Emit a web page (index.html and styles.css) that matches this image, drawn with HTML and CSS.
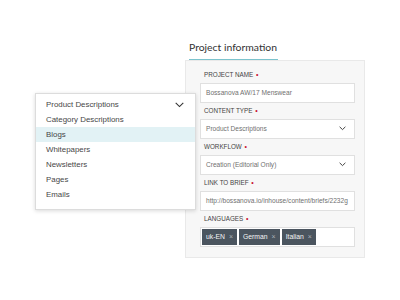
FILE: index.html
```html
<!DOCTYPE html>
<html>
<head>
<meta charset="utf-8">
<link rel="stylesheet" href="styles.css">
</head>
<body>
<div class="stage">
  <div class="tab"><span class="tab-title">Project information</span></div>
  <div class="panel">
    <div class="field">
      <div class="label">PROJECT NAME <span class="req">•</span></div>
      <div class="input">Bossanova AW/17 Menswear</div>
    </div>
    <div class="field">
      <div class="label">CONTENT TYPE <span class="req">•</span></div>
      <div class="input select">Product Descriptions
        <svg class="chev" width="7" height="5" viewBox="0 0 7 5"><path d="M0.6 0.8 L3.5 3.6 L6.4 0.8" fill="none" stroke="#444" stroke-width="1"/></svg>
      </div>
    </div>
    <div class="field">
      <div class="label">WORKFLOW <span class="req">•</span></div>
      <div class="input select">Creation (Editorial Only)
        <svg class="chev" width="7" height="5" viewBox="0 0 7 5"><path d="M0.6 0.8 L3.5 3.6 L6.4 0.8" fill="none" stroke="#444" stroke-width="1"/></svg>
      </div>
    </div>
    <div class="field">
      <div class="label">LINK TO BRIEF <span class="req">•</span></div>
      <div class="input">http://bossanova.io/inhouse/content/briefs/2232g</div>
    </div>
    <div class="field">
      <div class="label">LANGUAGES <span class="req">•</span></div>
      <div class="input tags">
        <span class="tag">uk-EN <span class="x">×</span></span>
        <span class="tag">German <span class="x">×</span></span>
        <span class="tag">Italian <span class="x">×</span></span>
      </div>
    </div>
  </div>
</div>

<div class="dropdown">
  <div class="item first">Product Descriptions
    <svg class="chev big" width="9" height="6" viewBox="0 0 9 6"><path d="M0.7 0.9 L4.5 4.6 L8.3 0.9" fill="none" stroke="#333" stroke-width="1.1"/></svg>
  </div>
  <div class="item">Category Descriptions</div>
  <div class="item active">Blogs</div>
  <div class="item">Whitepapers</div>
  <div class="item">Newsletters</div>
  <div class="item">Pages</div>
  <div class="item">Emails</div>
</div>
</body>
</html>
```
FILE: styles.css
```css
html, body {
  margin: 0;
  padding: 0;
  background: #ffffff;
  width: 400px;
  height: 300px;
  overflow: hidden;
  font-family: "Liberation Sans", Arial, sans-serif;
}

.stage {
  padding: 40px 35px 0 185px;
}

.tab {
  display: flex;
}

.tab-title {
  margin-left: 4px;
  font-family: "Lato", "Liberation Sans", sans-serif;
  font-size: 10.4px;
  line-height: 14px;
  color: #333;
  padding-bottom: 5px;
  padding-right: 1px;
  border-bottom: 1.5px solid #7cc3cd;
}

.panel {
  width: 155px;
  background: #f7f7f7;
  border: 1px solid #e9e9e9;
  padding: 8px 9px 10px 14px;
  margin-top: -0.5px;
  display: flex;
  flex-direction: column;
  gap: 2px;
}

.field {
  display: flex;
  flex-direction: column;
}

.label {
  height: 12px;
  line-height: 12px;
  padding-left: 4px;
  font-size: 6.3px;
  color: #444;
  margin-bottom: 2px;
}

.req {
  color: #c8102e;
  font-size: 7px;
  margin-left: 1px;
}

.input {
  box-sizing: border-box;
  height: 20px;
  background: #fff;
  border: 1px solid #e0e0e0;
  padding-left: 5px;
  font-size: 6.6px;
  line-height: 18px;
  color: #707070;
  display: flex;
  align-items: center;
}

.select {
  justify-content: space-between;
  padding-right: 8px;
}

.tags {
  padding: 1px;
  gap: 2px;
  align-items: stretch;
}

.tag {
  background: #4b555f;
  color: #f4f4f4;
  font-size: 6.8px;
  line-height: 16px;
  padding: 0 4px 0 4px;
  display: flex;
  align-items: center;
  gap: 4px;
}

.tag .x {
  color: #a9b0b7;
  font-size: 7px;
}

.dropdown {
  position: absolute;
  left: 35px;
  top: 93px;
  width: 159px;
  background: #fff;
  border: 1px solid #dcdcdc;
  box-shadow: 0 1px 4px rgba(0, 0, 0, 0.15);
  padding: 3px 0 7px 0;
}

.item {
  height: 15px;
  line-height: 15px;
  padding: 0 11px 0 10px;
  font-size: 7.9px;
  color: #474747;
  display: flex;
  align-items: center;
  justify-content: space-between;
}

.item.active {
  background: #e2f2f5;
}

.chev.big {
  margin-top: 1px;
}
```
